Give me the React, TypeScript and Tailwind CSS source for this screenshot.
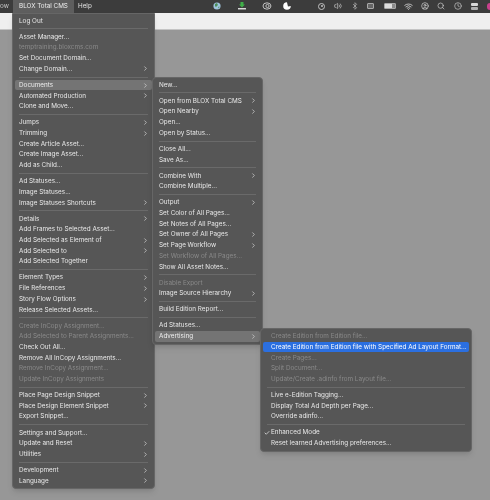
import { Check, ChevronRight, Search, Volume2, Bluetooth, Wifi, Clock, CircleUser } from "lucide-react"

type Row = { t?: string; sub?: boolean; off?: boolean; hover?: boolean; active?: boolean; check?: boolean }

const mainMenu: Row[] = [
  { t: "Log Out" },
  {},
  { t: "Asset Manager..." },
  { t: "temptraining.bloxcms.com", off: true },
  { t: "Set Document Domain..." },
  { t: "Change Domain...", sub: true },
  {},
  { t: "Documents", sub: true, hover: true },
  { t: "Automated Production", sub: true },
  { t: "Clone and Move..." },
  {},
  { t: "Jumps", sub: true },
  { t: "Trimming", sub: true },
  { t: "Create Article Asset..." },
  { t: "Create Image Asset..." },
  { t: "Add as Child..." },
  {},
  { t: "Ad Statuses..." },
  { t: "Image Statuses..." },
  { t: "Image Statuses Shortcuts", sub: true },
  {},
  { t: "Details", sub: true },
  { t: "Add Frames to Selected Asset..." },
  { t: "Add Selected as Element of", sub: true },
  { t: "Add Selected to", sub: true },
  { t: "Add Selected Together" },
  {},
  { t: "Element Types", sub: true },
  { t: "File References", sub: true },
  { t: "Story Flow Options", sub: true },
  { t: "Release Selected Assets..." },
  {},
  { t: "Create InCopy Assignment...", off: true },
  { t: "Add Selected to Parent Assignments...", off: true },
  { t: "Check Out All..." },
  { t: "Remove All InCopy Assignments..." },
  { t: "Remove InCopy Assignment...", off: true },
  { t: "Update InCopy Assignments", off: true },
  {},
  { t: "Place Page Design Snippet", sub: true },
  { t: "Place Design Element Snippet", sub: true },
  { t: "Export Snippet..." },
  {},
  { t: "Settings and Support..." },
  { t: "Update and Reset", sub: true },
  { t: "Utilities", sub: true },
  {},
  { t: "Development", sub: true },
  { t: "Language", sub: true },
]

const documentsMenu: Row[] = [
  { t: "New..." },
  {},
  { t: "Open from BLOX Total CMS", sub: true },
  { t: "Open Nearby", sub: true },
  { t: "Open..." },
  { t: "Open by Status..." },
  {},
  { t: "Close All..." },
  { t: "Save As..." },
  {},
  { t: "Combine With", sub: true },
  { t: "Combine Multiple..." },
  {},
  { t: "Output", sub: true },
  { t: "Set Color of All Pages..." },
  { t: "Set Notes of All Pages..." },
  { t: "Set Owner of All Pages", sub: true },
  { t: "Set Page Workflow", sub: true },
  { t: "Set Workflow of All Pages...", off: true },
  { t: "Show All Asset Notes..." },
  {},
  { t: "Disable Export", off: true },
  { t: "Image Source Hierarchy", sub: true },
  {},
  { t: "Build Edition Report..." },
  {},
  { t: "Ad Statuses..." },
  { t: "Advertising", sub: true, hover: true },
]

const advertisingMenu: Row[] = [
  { t: "Create Edition from Edition file...", off: true },
  { t: "Create Edition from Edition file with Specified Ad Layout Format...", active: true },
  { t: "Create Pages...", off: true },
  { t: "Split Document...", off: true },
  { t: "Update/Create .adinfo from Layout file...", off: true },
  {},
  { t: "Live e-Edition Tagging..." },
  { t: "Display Total Ad Depth per Page..." },
  { t: "Override adinfo..." },
  {},
  { t: "Enhanced Mode", check: true },
  { t: "Reset learned Advertising preferences..." },
]

function MenuRows({ rows, indent }: { rows: Row[]; indent?: boolean }) {
  return (
    <>
      {rows.map((r, i) =>
        r.t ? (
          <div
            key={i}
            className={
              "relative mx-[2px] flex h-[10.7px] items-center justify-between rounded-[2px] pr-[3px] whitespace-nowrap " +
              (indent ? "pl-[8px] " : "pl-[4px] ") +
              (r.active
                ? "bg-[#2b6fe0] text-white"
                : r.hover
                  ? "bg-[#747474] text-[#eeeeee]"
                  : r.off
                    ? "text-[#8a8a8a]"
                    : "text-[#e8e8e8]")
            }
          >
            {r.check && <Check size={6} strokeWidth={3} className="absolute left-[1px] text-[#e8e8e8]" />}
            <span>{r.t}</span>
            {r.sub && <ChevronRight size={7} strokeWidth={2.5} className="text-[#d0d0d0]" />}
          </div>
        ) : (
          <div key={i} className="flex h-[5.4px] items-center px-[6px]">
            <div className="h-px w-full bg-[#6a6a6a]" />
          </div>
        ),
      )}
    </>
  )
}

export default function App() {
  return (
    <div className="relative h-[500px] w-[490px] overflow-hidden bg-[#979797] font-['Inter',sans-serif] text-[6.35px] leading-none blur-[0.3px]">
      {/* Menu bar */}
      <div className="flex h-[12.5px] items-center bg-[#3c3c3c] text-[6.3px] text-[#e4e4e4]">
        <span className="w-[13px] shrink-0 text-[#c8c8c8]">ow</span>
        <span className="flex h-full w-[61px] shrink-0 items-center justify-center bg-[#5e5e5e] text-[#eeeeee]">BLOX Total CMS</span>
        <span className="ml-[4px]">Help</span>
        <div className="ml-auto flex w-[281px] shrink-0 items-center">
          <svg viewBox="0 0 8 8" className="ml-[4px] h-[8px] w-[8px]">
            <circle cx="4" cy="4" r="3.6" fill="#9fc4dc" />
            <path d="M2 2l2-1 1 2-2 2-1-1zM5 5l1.5-.5L6 6.5z" fill="#4d8f5a" />
          </svg>
          <svg viewBox="0 0 10 8" className="ml-[16px] h-[8px] w-[10px]">
            <path d="M3.5 0h3v2.5H8L5 5.5 2 2.5h1.5z" fill="#3fae49" />
            <rect x="1" y="6" width="8" height="1.5" fill="#d8d8d8" />
          </svg>
          <svg viewBox="0 0 10 8" className="ml-[15px] h-[8px] w-[10px]" fill="none" stroke="#c4c4c4">
            <ellipse cx="5" cy="4" rx="4" ry="3.2" />
            <circle cx="5.5" cy="4" r="1.6" />
          </svg>
          <svg viewBox="0 0 8 8" className="ml-[11px] h-[8px] w-[8px]">
            <path d="M4 .2A3.8 3.8 0 1 0 7.8 4L5 4.5 4.5 2.5z" fill="#ffffff" />
          </svg>
          <div className="ml-[27.5px] flex h-[7px] w-[7px] items-center justify-center rounded-full border border-[#c0c0c0]">
            <div className="h-[2px] w-[2px] rounded-full bg-[#c0c0c0]" />
          </div>
          <Volume2 size={8} className="ml-[8.5px] text-[#c8c8c8]" />
          <Bluetooth size={8} className="ml-[9px] text-[#b8b8b8]" />
          <div className="ml-[8.5px] h-[6px] w-[7px] rounded-[1px] border border-[#a8a8a8] bg-[#666666]" />
          <div className="ml-[9.5px] flex h-[6px] w-[12px] items-center rounded-[1px] border border-[#a8a8a8] bg-[#8a8a8a]">
            <div className="h-full w-[7px] bg-[#dddddd]" />
          </div>
          <Wifi size={9} className="ml-[8.5px] text-[#e8e8e8]" />
          <CircleUser size={8} className="ml-[7.5px] text-[#d8d8d8]" />
          <Search size={8} className="ml-[8px] text-[#d0d0d0]" />
          <Clock size={8} className="ml-[9px] text-[#c8c8c8]" />
          <div className="ml-[9.5px] flex h-[7px] w-[7px] flex-col gap-px">
            <div className="h-[3px] rounded-[1px] bg-[#d8d8d8]" />
            <div className="h-[3px] rounded-[1px] bg-[#b0b0b0]" />
          </div>
          <div className="ml-[9px] h-[7px] w-[3px] rounded-l-full bg-[#c9408c]" />
        </div>
      </div>
      <div className="h-[17.5px] border-b border-[#c4c4c4] bg-[#efefef]" />

      {/* Main menu */}
      <div className="absolute left-[12px] top-[13px] w-[143px] rounded-b-[4px] border border-[#666666] bg-[#565656] py-[1.5px] shadow-md">
        <MenuRows rows={mainMenu} />
      </div>

      {/* Documents submenu */}
      <div className="absolute left-[152px] top-[76.5px] w-[111px] rounded-[4px] border border-[#666666] bg-[#565656] py-[2px] shadow-md">
        <MenuRows rows={documentsMenu} />
      </div>

      {/* Advertising submenu */}
      <div className="absolute left-[260px] top-[328px] w-[212px] rounded-[4px] border border-[#666666] bg-[#565656] py-[2px] shadow-md">
        <MenuRows rows={advertisingMenu} indent />
      </div>
    </div>
  )
}
